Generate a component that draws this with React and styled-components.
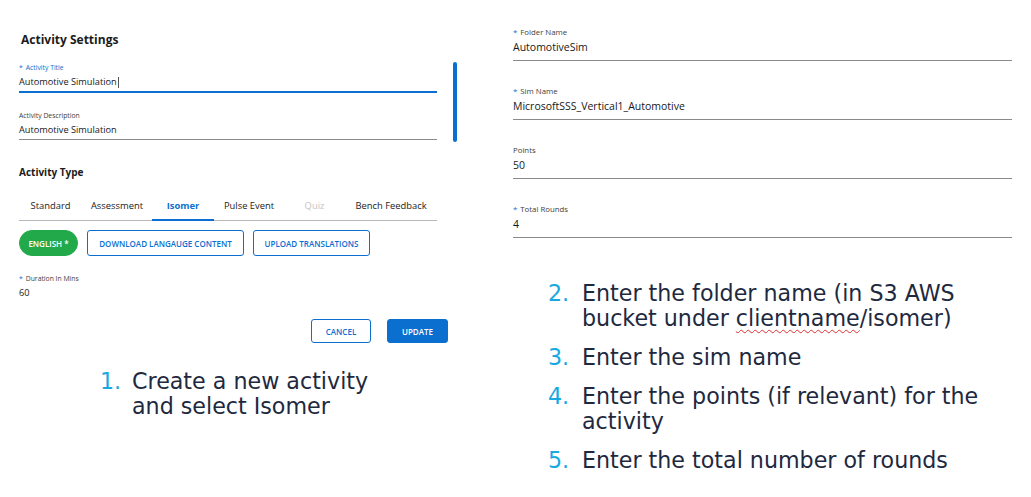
import React from "react";
import styled, { createGlobalStyle } from "styled-components";

const GlobalStyle = createGlobalStyle`
  html, body {
    margin: 0;
    padding: 0;
    background: #ffffff;
  }
  body {
    font-family: "Open Sans", "Noto Sans", sans-serif;
    color: #181818;
  }
`;

const Page = styled.div`
  width: 1031px;
  height: 497px;
  display: grid;
  grid-template-columns: 513px 499px;
  overflow: hidden;
`;

const LeftColumn = styled.div`
  padding: 32px 0 0 19px;
  display: flex;
  flex-direction: column;
`;

const RightColumn = styled.div`
  padding-top: 27px;
  display: flex;
  flex-direction: column;
`;

const PanelRow = styled.div`
  display: flex;
  align-items: flex-start;
`;

const FormBody = styled.div`
  width: 418px;
  display: flex;
  flex-direction: column;
`;

const ScrollThumb = styled.div`
  width: 4px;
  height: 80px;
  margin: 30px 0 0 16px;
  border-radius: 2px;
  background: #0b6fcf;
`;

const SectionTitle = styled.div`
  font-size: ${(p) => p.size || 12}px;
  font-weight: 700;
  line-height: 16px;
  margin: ${(p) => p.margin || "0"};
  color: #1b1b1b;
`;

/* left panel field: compact */
const Field = styled.div`
  display: flex;
  flex-direction: column;
  margin-top: ${(p) => p.top || 0}px;
  border-bottom: ${(p) => (p.active ? "2px solid #0b6fcf" : "1px solid #8a8a8a")};
  padding-bottom: 2px;
  ${(p) => p.bare && "border-bottom: none; padding-bottom: 0;"}
`;

const Label = styled.div`
  font-size: 6.8px;
  line-height: 10px;
  white-space: nowrap;
  color: ${(p) => (p.active ? "#0b6fcf" : "#3e3e3c")};
`;

const Star = styled.span`
  color: #0b6fcf;
  margin-right: 3px;
`;

const Value = styled.div`
  font-size: 9.2px;
  line-height: 14px;
  margin-top: 2px;
  color: #181818;
  display: flex;
  align-items: center;
  white-space: nowrap;
`;

const Caret = styled.span`
  display: inline-block;
  width: 1px;
  height: 11px;
  background: #555;
  margin-left: 1px;
`;

/* right panel field: roomier */
const WideField = styled.div`
  display: flex;
  flex-direction: column;
  margin-top: ${(p) => p.top || 0}px;
  border-bottom: 1px solid #8a8a8a;
  padding-bottom: 5px;
`;

const WideLabel = styled.div`
  font-size: 7.8px;
  line-height: 10px;
  color: #3e3e3c;
`;

const WideValue = styled.div`
  font-size: 10.5px;
  line-height: 16px;
  margin-top: 2px;
  color: #181818;
`;

const Tabs = styled.div`
  display: flex;
  border-bottom: 1px solid #b8b8b8;
  margin-top: 19px;
`;

const Tab = styled.div`
  width: ${(p) => p.w}px;
  text-align: center;
  white-space: nowrap;
  font-size: 9.4px;
  line-height: 14px;
  padding-bottom: 6px;
  margin-bottom: -1px;
  color: ${(p) => (p.active ? "#0b6fcf" : p.disabled ? "#c4c4c4" : "#222")};
  font-weight: ${(p) => (p.active ? 700 : 400)};
  border-bottom: 2px solid ${(p) => (p.active ? "#0b6fcf" : "transparent")};
`;

const ButtonRow = styled.div`
  display: flex;
  gap: ${(p) => p.gap || 9}px;
  margin-top: ${(p) => p.top || 0}px;
  justify-content: ${(p) => p.justify || "flex-start"};
  padding-right: ${(p) => p.right || 0}px;
`;

const Button = styled.div`
  height: ${(p) => p.h || 26}px;
  width: ${(p) => p.w}px;
  box-sizing: border-box;
  display: flex;
  align-items: center;
  justify-content: center;
  white-space: nowrap;
  font-size: 8px;
  font-weight: 600;
  border-radius: ${(p) => (p.pill ? "14px" : "3px")};
  border: 1px solid ${(p) => (p.variant === "green" ? "#22a94a" : "#0b6fcf")};
  background: ${(p) =>
    p.variant === "green" ? "#22a94a" : p.variant === "solid" ? "#0b6fcf" : "#fff"};
  color: ${(p) => (p.variant ? "#fff" : "#0b6fcf")};
`;

const Steps = styled.ol`
  list-style: none;
  margin: ${(p) => p.margin || "0"};
  padding: 0;
  display: flex;
  flex-direction: column;
  gap: 14px;
  font-family: "DejaVu Sans", Verdana, sans-serif;
  font-size: 22.2px;
  line-height: 25px;
  color: #1e2940;
`;

const Step = styled.li`
  display: grid;
  grid-template-columns: ${(p) => p.numWidth || 33}px 1fr;
  white-space: nowrap;
`;

const StepNum = styled.span`
  color: #19a9e1;
`;

const Squiggle = styled.span`
  text-decoration: underline wavy #e03030;
  text-decoration-thickness: 1px;
  text-underline-offset: 3px;
`;

const RightField = ({ label, required, value, top }) => (
  <WideField top={top}>
    <WideLabel>
      {required && <Star>*</Star>}
      {label}
    </WideLabel>
    <WideValue>{value}</WideValue>
  </WideField>
);

const tabs = [
  { name: "Standard", w: 63 },
  { name: "Assessment", w: 70 },
  { name: "Isomer", w: 62, active: true },
  { name: "Pulse Event", w: 70 },
  { name: "Quiz", w: 61, disabled: true },
  { name: "Bench Feedback", w: 92 },
];

export default function App() {
  return (
    <>
      <GlobalStyle />
      <Page>
        <LeftColumn>
          <PanelRow>
            <FormBody>
              <SectionTitle margin="0 0 0 2px">Activity Settings</SectionTitle>
              <Field top={15} active>
                <Label active>
                  <Star>*</Star>Activity Title
                </Label>
                <Value>
                  Automotive Simulation
                  <Caret />
                </Value>
              </Field>
              <Field top={18}>
                <Label>Activity Description</Label>
                <Value>Automotive Simulation</Value>
              </Field>
              <SectionTitle size={10} margin="24px 0 0">
                Activity Type
              </SectionTitle>
              <Tabs>
                {tabs.map((t) => (
                  <Tab key={t.name} w={t.w} active={t.active} disabled={t.disabled}>
                    {t.name}
                  </Tab>
                ))}
              </Tabs>
              <ButtonRow top={9}>
                <Button variant="green" pill w={59}>
                  ENGLISH *
                </Button>
                <Button w={157}>DOWNLOAD LANGAUGE CONTENT</Button>
                <Button w={117}>UPLOAD TRANSLATIONS</Button>
              </ButtonRow>
              <Field top={18} bare>
                <Label>
                  <Star>*</Star>Duration In Mins
                </Label>
                <Value>60</Value>
              </Field>
            </FormBody>
            <ScrollThumb />
          </PanelRow>
          <ButtonRow top={19} gap={16} justify="flex-end" right={65}>
            <Button w={60} h={24}>
              CANCEL
            </Button>
            <Button variant="solid" w={61} h={24}>
              UPDATE
            </Button>
          </ButtonRow>
          <Steps margin="26px 0 0 81px">
            <Step numWidth={32}>
              <StepNum>1.</StepNum>
              <span>
                Create a new activity
                <br />
                and select Isomer
              </span>
            </Step>
          </Steps>
        </LeftColumn>
        <RightColumn>
          <RightField required label="Folder Name" value="AutomotiveSim" />
          <RightField
            top={25}
            required
            label="Sim Name"
            value="MicrosoftSSS_Vertical1_Automotive"
          />
          <RightField top={25} label="Points" value="50" />
          <RightField top={25} required label="Total Rounds" value="4" />
          <Steps margin="43px 0 0 35px">
            <Step numWidth={34}>
              <StepNum>2.</StepNum>
              <span>
                Enter the folder name (in S3 AWS
                <br />
                bucket under <Squiggle>clientname</Squiggle>/isomer)
              </span>
            </Step>
            <Step numWidth={34}>
              <StepNum>3.</StepNum>
              <span>Enter the sim name</span>
            </Step>
            <Step numWidth={34}>
              <StepNum>4.</StepNum>
              <span>
                Enter the points (if relevant) for the
                <br />
                activity
              </span>
            </Step>
            <Step numWidth={34}>
              <StepNum>5.</StepNum>
              <span>Enter the total number of rounds</span>
            </Step>
          </Steps>
        </RightColumn>
      </Page>
    </>
  );
}
